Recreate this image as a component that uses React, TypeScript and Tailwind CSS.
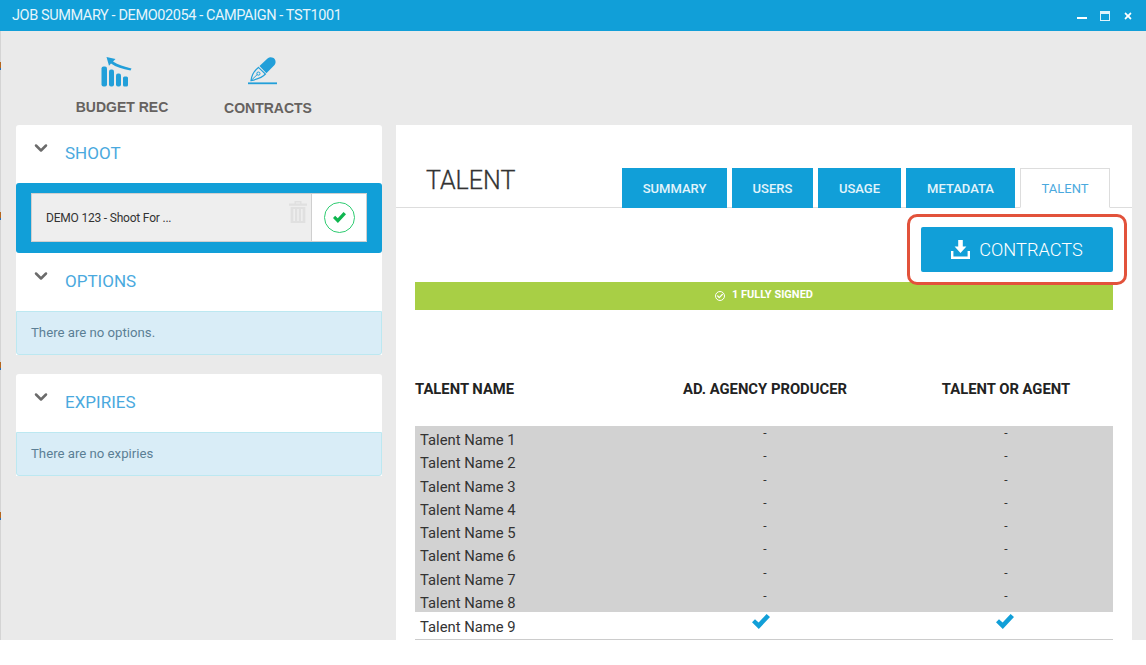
import React from "react";
import { FaCheck, FaTimes } from "react-icons/fa";
import { ChevronDown } from "lucide-react";

const tabs = [
  { label: "SUMMARY", w: "w-[105px]" },
  { label: "USERS", w: "w-[81px]" },
  { label: "USAGE", w: "w-[83px]" },
  { label: "METADATA", w: "w-[109px]" },
];

const names = [1, 2, 3, 4, 5, 6, 7, 8];

// bits of the page behind the window, showing along its left edge
const edgeMarks = ["top-[62px]", "top-[212px]", "top-[362px]", "top-[512px]"];

function BudgetIcon() {
  return (
    <svg width="31" height="30" viewBox="0 0 31 30" fill="#229fd9">
      <rect x="0.5" y="9.5" width="5.5" height="20" rx="2" />
      <rect x="8" y="12.5" width="5" height="17" rx="2" />
      <rect x="15" y="16.5" width="5" height="13" rx="2" />
      <rect x="22" y="19.5" width="5" height="10" rx="1.5" />
      <path d="M5.5 0 L14.5 2 L12 4.4 C17 7.5 23 9.5 30.5 11.4 L29.5 13.4 C21.5 12 15 10 10 6.4 L8 8.8 Z" />
    </svg>
  );
}

function PenIcon() {
  return (
    <svg width="29" height="28" viewBox="0 0 29 28">
      <path d="M11.5 9 L19.5 1.4 C22 -0.4 25.2 0.2 26.8 2.2 C28.2 4.6 27.6 7 25.8 8.8 L18.4 16.2 Z" fill="#229fd9" />
      <path d="M10.4 10.4 L17.4 17 C14.4 20.4 9.4 22.2 3 23.6 C3.6 18.4 6.4 13.4 10.4 10.4 Z" fill="none" stroke="#229fd9" strokeWidth="1.2" />
      <path d="M3.4 23.2 L9.4 17.4" stroke="#229fd9" strokeWidth="1" />
      <circle cx="10.4" cy="16.6" r="1.6" fill="none" stroke="#229fd9" strokeWidth="1" />
      <rect x="0" y="25.4" width="29" height="1.8" fill="#229fd9" />
    </svg>
  );
}

function TrashIcon() {
  return (
    <svg width="18" height="22" viewBox="0 0 18 22" fill="#e0e0e0">
      <path d="M5.5 0 H12.5 V2.4 H18 V4.8 H0 V2.4 H5.5 Z M7 1.4 V2.4 H11 V1.4 Z" fillRule="evenodd" />
      <path d="M1.6 6 H16.4 V22 H1.6 Z M4.4 8 V20 H6 V8 Z M8.2 8 V20 H9.8 V8 Z M12 8 V20 H13.6 V8 Z" fillRule="evenodd" />
    </svg>
  );
}

function DownloadIcon() {
  return (
    <svg width="19" height="19" viewBox="0 0 19 19" fill="#ffffff">
      <path d="M7.2 0 H11.8 V6.6 H15.4 L9.5 13 L3.6 6.6 H7.2 Z" />
      <path d="M0 11 H2.4 V16.4 H16.6 V11 H19 V19 H0 Z" />
    </svg>
  );
}

function TickIcon({ className }: { className: string }) {
  return (
    <svg viewBox="0 0 18 15" className={className} fill="currentColor">
      <path d="M0 8.2 L3 5.2 L6.6 8.6 L14.6 0 L18 3 L6.8 15 Z" />
    </svg>
  );
}

function SectionHead({ label, top }: { label: string; top: string }) {
  return (
    <div className={`h-[58px] flex items-start pl-[15px] ${top}`}>
      <ChevronDown className="w-[20px] h-[20px] text-[#6b6b6b] mt-[-1px]" strokeWidth={3} />
      <span className="ml-[14px] text-[17px] leading-[28px] text-[#4aa9de]">{label}</span>
    </div>
  );
}

function Notice({ text }: { text: string }) {
  return (
    <div className="h-[44px] bg-[#d9edf7] border border-[#bce8f1] rounded-b-[3px] flex items-center pl-[14px] text-[13.2px] text-[#5b7f95]">
      {text}
    </div>
  );
}

export default function App() {
  return (
    <div className="relative w-[1146px] h-[665px] bg-white overflow-hidden font-['Roboto',sans-serif]">
      <header className="h-[31px] bg-[#119fd8] flex items-center justify-between pl-[12px] pr-[13px] text-white">
        <span className="text-[14.5px] tracking-[-0.4px] text-[#e6f5fb]">JOB SUMMARY - DEMO02054 - CAMPAIGN - TST1001</span>
        <div className="flex items-center gap-[13px]">
          <span className="block w-[10px] h-[2px] bg-white mt-[4px]" />
          <span className="block w-[10px] h-[10px] border border-[#dff3fb] border-t-[3px]" />
          <FaTimes className="w-[10px] h-[10px]" />
        </div>
      </header>

      <div className="h-[609px] border-l border-[#d4d4d4] bg-[#eaeaea] overflow-hidden">
        <nav className="h-[94px] flex font-['Liberation_Sans',sans-serif] font-bold text-[14px] text-[#66625f]">
          <div className="ml-[74px] w-[94px] flex flex-col items-center pt-[26px]">
            <span className="block mr-[11px]">
              <BudgetIcon />
            </span>
            <span className="mt-[10px] leading-[20px] whitespace-nowrap">BUDGET REC</span>
          </div>
          <div className="ml-[55px] w-[88px] flex flex-col items-center pt-[26px]">
            <span className="block mr-[11px]">
              <PenIcon />
            </span>
            <span className="mt-[13px] leading-[20px]">CONTRACTS</span>
          </div>
        </nav>

        <div className="flex items-start pl-[15px]">
          <aside className="w-[366px] mr-[14px]">
            <section className="bg-white rounded-t-[3px]">
              <SectionHead label="SHOOT" top="pt-[14px]" />
              <div className="h-[70px] bg-[#119fd8] rounded-[3px] px-[15px] py-[10px]">
                <div className="h-[49px] flex border border-[#cfcfcf] bg-[#eeeeee]">
                  <div className="flex-1 flex items-center pl-[14px] text-[12px] tracking-[-0.2px] text-[#333333] relative">
                    DEMO 123 - Shoot For ...
                    <span className="absolute right-[4px] top-[7px]">
                      <TrashIcon />
                    </span>
                  </div>
                  <div className="w-[55px] bg-white border-l border-[#cfcfcf] flex items-center justify-center">
                    <div className="w-[31px] h-[31px] rounded-full border border-[#2ecc71] flex items-center justify-center">
                      <TickIcon className="w-[13px] h-[11px] text-[#0fb64f]" />
                    </div>
                  </div>
                </div>
              </div>
              <SectionHead label="OPTIONS" top="pt-[14px]" />
              <Notice text="There are no options." />
            </section>

            <section className="mt-[19px] bg-white rounded-t-[3px]">
              <SectionHead label="EXPIRIES" top="pt-[14px]" />
              <Notice text="There are no expiries" />
            </section>
          </aside>

          <main className="w-[736px] h-[515px] bg-white">
            <div className="h-[83px] border-b border-[#dddddd] flex items-start pt-[44px] relative">
              <h1 className="ml-[30px] text-[25px] leading-[24px] font-light text-[#333333] [-webkit-text-stroke:0.3px_#333333]">TALENT</h1>
              <div className="absolute left-[226px] bottom-[-1px] flex gap-[5px] text-[13px] font-medium">
                {tabs.map((t) => (
                  <div key={t.label} className={`${t.w} h-[40px] pt-px bg-[#119fd8] text-[#e3f4fb] flex items-center justify-center`}>
                    {t.label}
                  </div>
                ))}
                <div className="w-[90px] h-[40px] pt-px bg-white border border-[#dddddd] border-b-white text-[#4aa9de] font-normal flex items-center justify-center">
                  TALENT
                </div>
              </div>
            </div>

            <div className="pl-[19px] pr-[19px]">
              <div className="flex justify-end mt-[19px]">
                <button className="w-[192px] h-[45px] bg-[#119fd8] rounded-[2px] text-white flex items-center justify-center gap-[9px] text-[18.2px] font-light">
                  <DownloadIcon />
                  <span className="pt-px">CONTRACTS</span>
                </button>
              </div>

              <div className="mt-[10px] h-[28px] bg-[#a8cf45] text-white text-[11px] font-bold flex items-center justify-center gap-[7px] pb-px">
                <span className="w-[10px] h-[10px] rounded-full border border-white flex items-center justify-center">
                  <FaCheck className="w-[6px] h-[6px]" />
                </span>
                1 FULLY SIGNED
              </div>

              <div className="grid grid-cols-[216px_268px_214px] mt-[68px] h-[20px] items-center text-[14.8px] font-bold text-[#222222]">
                <div>TALENT NAME</div>
                <div className="text-center">AD. AGENCY PRODUCER</div>
                <div className="text-center">TALENT OR AGENT</div>
              </div>

              <div className="mt-[28px] bg-[#d2d2d2]">
                {names.map((n) => (
                  <div key={n} className="grid grid-cols-[216px_268px_214px] h-[23.25px] text-[14.8px] text-[#333333]">
                    <div className="pl-[5px] leading-[29px]">Talent Name {n}</div>
                    <div className="text-center text-[12px] leading-[14px]">-</div>
                    <div className="text-center text-[12px] leading-[14px]">-</div>
                  </div>
                ))}
              </div>
              <div className="grid grid-cols-[216px_268px_214px] h-[28px] border-b border-[#cccccc] text-[14.8px] text-[#333333]">
                <div className="pl-[5px] leading-[30px]">Talent Name 9</div>
                <div className="flex justify-center pt-[2px] pr-[8px]">
                  <TickIcon className="w-[18px] h-[15px] text-[#119fd8]" />
                </div>
                <div className="flex justify-center pt-[2px] pr-[3px]">
                  <TickIcon className="w-[18px] h-[15px] text-[#119fd8]" />
                </div>
              </div>
            </div>
          </main>
        </div>
      </div>

      {edgeMarks.map((m) => (
        <div key={m} className={`absolute left-0 ${m} w-px h-[8px] bg-[#b5651d] border-b-2 border-[#2a6fb5]`} />
      ))}

      <div className="absolute left-[907px] top-[214px] w-[220px] h-[71px] rounded-[10px] border-[3px] border-[#e2523b]" />
    </div>
  );
}
